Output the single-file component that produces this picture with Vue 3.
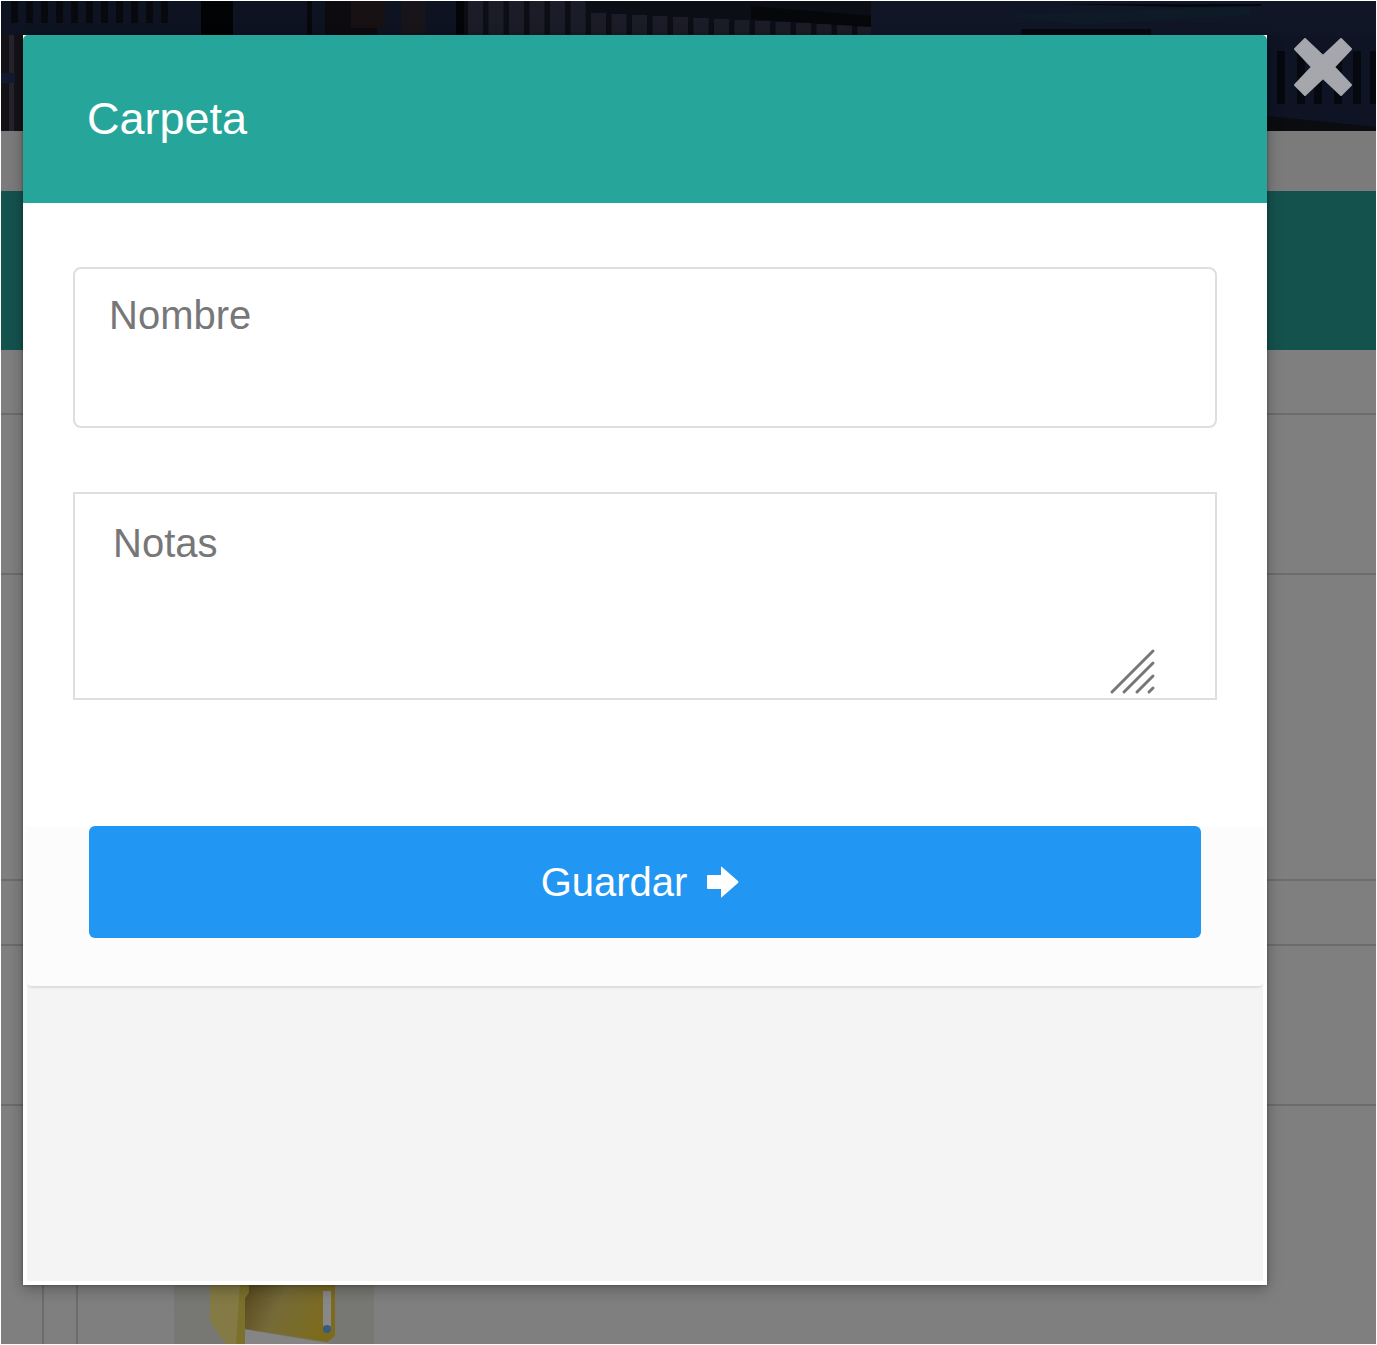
<script setup>
import { ref } from 'vue'

const nombre = ref('')
const notas = ref('')
const open = ref(true)

const railings = Array.from({ length: 20 }, (_, i) => ({ x: 467 + i * 20.5, y: i < 6 ? 0 : (i - 6) + 12 }))
const pickets = Array.from({ length: 11 }, (_, i) => 10 + i * 15)
const rightBars = [1276, 1296, 1313, 1333, 1352, 1369]
</script>

<template>
  <div class="page">
    <div class="backdrop" aria-hidden="true">
      <svg class="banner" viewBox="0 0 1375 130" preserveAspectRatio="none">
        <rect width="1375" height="130" fill="#0d1320" />
        <rect y="34" width="24" height="96" fill="#141217" />
        <rect x="8" y="34" width="5" height="96" fill="#25232b" />
        <rect y="72" width="14" height="10" fill="#121a30" />
        <rect v-for="x in pickets" :key="x" :x="x" width="7" height="22" fill="#07090f" />
        <rect x="200" width="32" height="34" fill="#020304" />
        <rect x="306" width="5" height="34" fill="#06080d" />
        <rect x="324" width="52" height="34" fill="#0d0b0f" />
        <rect x="350" width="34" height="27" fill="#171113" />
        <rect x="400" width="24" height="34" fill="#17141a" />
        <rect x="455" width="8" height="34" fill="#030508" />
        <rect x="463" width="407" height="34" fill="#0b0e15" />
        <rect v-for="r in railings" :key="r.x" :x="r.x" :y="r.y" width="15" height="34" fill="#1b1c27" />
        <path d="M750 5L870 15V26L750 18Z" fill="#05070a" />
        <rect x="870" width="506" height="34" fill="#101626" />
        <path d="M1000 14L1250 5V14L1080 24Z" fill="#0e1a28" />
        <path d="M1060 3H1260V5L1180 6Z" fill="#04070b" />
        <rect x="1020" y="28" width="130" height="6" fill="#07090f" />
        <rect x="1266" y="34" width="110" height="96" fill="#0e1424" />
        <rect v-for="x in rightBars" :key="x" :x="x" y="50" width="8" height="53" fill="#06080f" />
        <path d="M1266 115L1375 126V130H1266Z" fill="#0a0c10" />
      </svg>
      <div class="strip"></div>
      <div class="toolbar"></div>
      <div class="row row-head"></div>
      <div class="row row-filter"></div>
      <div class="row row-wide"></div>
      <div class="row row-head"></div>
      <div class="row row-filter"></div>
      <div class="tree">
        <div class="gutter"></div>
        <div class="thumb">
          <svg viewBox="0 0 200 60" width="200" height="60">
            <defs>
              <linearGradient id="front" x1="0" y1="0" x2="1" y2="0.3">
                <stop offset="0" stop-color="#57481f" />
                <stop offset="0.45" stop-color="#756b38" />
                <stop offset="1" stop-color="#7d6b1c" />
              </linearGradient>
            </defs>
            <path d="M68 45L158 60H68Z" fill="#858586" />
            <path d="M75 0H161V52L153 58L71 45V13L75 8Z" fill="url(#front)" />
            <path d="M36 0H75V8L71 14V60H52L36 38Z" fill="#837a45" />
            <path d="M66 0H75V8L71 14V60H62Z" fill="#7b702c" />
            <rect x="149" y="7" width="8" height="35" fill="#888" />
            <circle cx="153" cy="45" r="4" fill="#365d80" />
          </svg>
        </div>
      </div>
    </div>

    <div v-if="open" class="overlay">
      <section class="modal" role="dialog" aria-modal="true" aria-labelledby="modal-title">
        <header class="modal-head">
          <h1 id="modal-title">Carpeta</h1>
        </header>
        <form class="card" @submit.prevent>
          <div class="fields">
            <input v-model="nombre" class="field name" type="text" placeholder="Nombre" aria-label="Nombre" />
            <div class="notes">
              <textarea v-model="notas" class="field" placeholder="Notas" aria-label="Notas"></textarea>
              <svg class="grip" viewBox="0 0 44 44" aria-hidden="true">
                <path d="M1 42L42 1M13 42L42 13M26 42L42 26M38 42L42 38" />
              </svg>
            </div>
          </div>
          <footer class="actions">
            <button class="save" type="submit">
              <span>Guardar</span>
              <svg viewBox="0 0 32 32" width="32" height="32" aria-hidden="true">
                <path d="M1 9H14V1Q14 0 15 1L31 15Q32 16 31 17L15 31Q14 32 14 31V23H1Q0 23 0 22V10Q0 9 1 9Z" fill="#fff" />
              </svg>
            </button>
          </footer>
        </form>
      </section>
      <button class="close" type="button" aria-label="Cerrar" @click="open = false">
        <svg viewBox="0 0 58 58" width="58" height="58" aria-hidden="true">
          <path d="M11 1L29 18L47 1L57 11L40 29L57 47L47 57L29 40L11 57L1 47L18 29L1 11Z" fill="#a5a7ac" stroke="#a5a7ac" stroke-width="2" stroke-linejoin="round" />
        </svg>
      </button>
    </div>
  </div>
</template>

<style>
body {
  margin: 0;
  background: #fff;
}
</style>

<style scoped>
.page {
  position: relative;
  box-sizing: border-box;
  min-height: 100vh;
  font-family: "Liberation Sans", Arial, sans-serif;
}
.backdrop {
  position: absolute;
  inset: 1px;
  display: flex;
  flex-direction: column;
  overflow: hidden;
  background: #7f7f7f;
}
.banner {
  display: block;
  flex: none;
  width: 100%;
  height: 130px;
}
.strip {
  flex: none;
  height: 60px;
  background: #7b7b7b;
}
.toolbar {
  flex: none;
  height: 159px;
  background: #14524e;
}
.row {
  box-sizing: border-box;
  flex: none;
  border-bottom: 2px solid #6c6c6c;
}
.row-head {
  height: 65px;
}
.row-filter {
  height: 160px;
}
.row-wide {
  height: 306px;
}
.tree {
  display: flex;
  flex: 1;
  padding-left: 41px;
}
.gutter {
  width: 32px;
  border: solid #6c6c6c;
  border-width: 0 2px;
}
.thumb {
  display: flex;
  align-items: flex-end;
  margin-left: 96px;
  background: #777873;
}
.thumb svg {
  display: block;
}
.overlay {
  position: relative;
  display: flex;
  align-items: flex-start;
  box-sizing: border-box;
  min-height: 100vh;
  padding: 35px 25px 60px 23px;
}
.modal {
  display: flex;
  flex: 1;
  flex-direction: column;
  align-self: stretch;
  box-sizing: border-box;
  background: #fff;
  box-shadow: 0 4px 14px rgba(0, 0, 0, 0.3), 0 0 3px rgba(0, 0, 0, 0.3);
}
.modal::after {
  content: "";
  flex: 1;
  margin: 0 4px 4px;
  background: #f4f4f4;
}
.modal-head {
  padding: 56px 64px;
  border-radius: 5px 5px 0 0;
  background: #26a69a;
}
.modal-head h1 {
  margin: 0;
  color: #fff;
  font-size: 45px;
  font-weight: 400;
  line-height: 56px;
}
.card {
  position: relative;
  margin: 0 3px;
  border-radius: 0 0 6px 6px;
  background: #fff;
  box-shadow: 0 3px 2px -1px #dcdcdc;
}
.fields {
  display: flex;
  flex-direction: column;
  gap: 64px;
  padding: 64px 47px 126px;
}
.field {
  display: block;
  box-sizing: border-box;
  width: 100%;
  margin: 0;
  border: 2px solid #dedede;
  outline: 0;
  background: #fff;
  color: #555;
  font-family: inherit;
  font-size: 40px;
  line-height: 48px;
}
.field::placeholder {
  color: #777;
  opacity: 1;
}
.name {
  height: 161px;
  padding: 0 34px 64px;
  border-radius: 8px;
}
.notes {
  position: relative;
}
textarea.field {
  height: 208px;
  padding: 25px 38px;
  border-radius: 0;
  resize: none;
}
.grip {
  position: absolute;
  right: 62px;
  bottom: 6px;
  width: 44px;
  height: 44px;
  overflow: visible;
  fill: none;
  stroke: #777;
  stroke-width: 3px;
  stroke-linecap: round;
}
.actions {
  padding: 0 63px 48px;
  border-radius: 0 0 6px 6px;
  background: #fcfcfc;
}
.save {
  display: flex;
  align-items: center;
  justify-content: center;
  gap: 20px;
  width: 100%;
  height: 112px;
  padding: 0 10px 0 0;
  border: 0;
  border-radius: 6px;
  background: #2196f3;
  color: #fff;
  font-family: inherit;
  font-size: 40px;
  line-height: 48px;
}
.close {
  flex: none;
  margin: 3px 0 0 27px;
  padding: 0;
  border: 0;
  background: none;
}
.close svg {
  display: block;
}
</style>
